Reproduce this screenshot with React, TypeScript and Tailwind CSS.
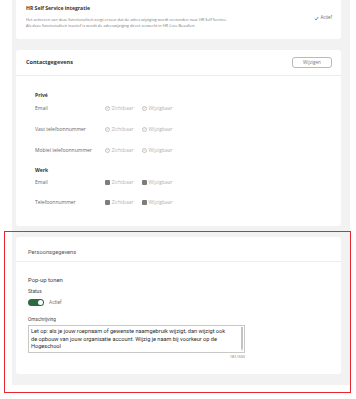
/**
 * Profiel instellingen — HR Self Service, contactgegevens en persoonsgegevens.
 */

const PRIVE_ROWS = ["Email", "Vast telefoonnummer", "Mobiel telefoonnummer"];
const WERK_ROWS = ["Email", "Telefoonnummer"];

export default function App() {
  return (
    <div className="relative w-[356px] h-[399px] bg-white overflow-hidden font-['Open_Sans',sans-serif]">
      <div className="ml-[12px] w-[338px] h-[385px] bg-[#f2f2f2] pl-[4px] pr-[9px] flex flex-col gap-[11px]">
        <HrCard />
        <ContactCard />
        <PersoonCard />
      </div>

      {/* Annotation frame */}
      <div className="absolute left-[4px] top-[231px] w-[347px] h-[162px] border-[1.5px] border-[#e8262c]" />
    </div>
  );
}

function HrCard() {
  return (
    <div className="h-[39px] bg-white rounded-b-[3px] pl-[10px] pr-[9px] pt-[5px] flex">
      <div className="flex-1">
        <div className="text-[5.1px] leading-[6px] font-bold text-[#333]">HR Self Service integratie</div>
        <div className="mt-[6px] text-[3.9px] leading-[6px] text-[#777] whitespace-nowrap">
          <div>Het activeren van deze functionaliteit zorgt ervoor dat de adres wijziging wordt verzonden naar HR Self Service.</div>
          <div>Als deze functionaliteit inactief is wordt de adreswijziging direct verwerkt in HR Core Beaufort.</div>
        </div>
      </div>
      <div className="pt-[10px] flex items-start gap-[2px] text-[4.4px] leading-[5px] text-[#666]">
        <svg width="5" height="5" viewBox="0 0 10 10" className="mt-[0.5px]">
          <path d="M1.5 5.5 L4 8 L8.5 2" fill="none" stroke="#3a8fd8" strokeWidth="1.8" />
        </svg>
        <span>Actief</span>
      </div>
    </div>
  );
}

function ContactCard() {
  return (
    <div className="h-[176px] bg-white rounded-[3px]">
      <div className="h-[26px] border-b border-[#ececec] pl-[10px] pr-[9px] flex items-center justify-between">
        <span className="text-[5.5px] font-bold text-[#333]">Contactgegevens</span>
        <button className="w-[40px] h-[11px] border border-[#b9b9b9] rounded-[3px] text-[4.6px] text-[#777] flex items-center justify-center">
          Wijzigen
        </button>
      </div>
      <div className="pl-[19px] pt-[16px]">
        <div className="text-[5px] leading-[6px] font-bold text-[#333]">Privé</div>
        <div className="mt-[7px] flex flex-col gap-[15px]">
          {PRIVE_ROWS.map((label) => (
            <PermRow key={label} label={label} checked />
          ))}
        </div>
        <div className="mt-[14px] text-[5px] leading-[6px] font-bold text-[#333]">Werk</div>
        <div className="mt-[6px] flex flex-col gap-[14px]">
          {WERK_ROWS.map((label) => (
            <PermRow key={label} label={label} checked={false} />
          ))}
        </div>
      </div>
    </div>
  );
}

function PermRow({ label, checked }: { label: string; checked: boolean }) {
  return (
    <div className="flex items-center h-[6px] text-[5px] leading-[6px]">
      <span className="w-[70px] shrink-0 text-[#666] whitespace-nowrap">{label}</span>
      <Perm label="Zichtbaar" checked={checked} />
      <span className="w-[11px] shrink-0" />
      <Perm label="Wijzigbaar" checked={checked} />
    </div>
  );
}

function Perm({ label, checked }: { label: string; checked: boolean }) {
  return (
    <span className="flex items-center gap-[1.5px] w-[26px] shrink-0 text-[#b3b3b3] whitespace-nowrap">
      {checked ? (
        <span className="w-[5px] h-[5px] shrink-0 rounded-full border-[0.6px] border-[#c4c4c4] flex items-center justify-center">
          <svg width="4" height="4" viewBox="0 0 10 10">
            <path d="M2 5.5 L4.2 7.5 L8 2.5" fill="none" stroke="#999" strokeWidth="1.4" />
          </svg>
        </span>
      ) : (
        <span className="w-[5px] h-[5px] shrink-0 rounded-[1px] bg-[#7d7d7d]" />
      )}
      <span>{label}</span>
    </span>
  );
}

function PersoonCard() {
  return (
    <div className="h-[137px] bg-white rounded-[3px] font-['Roboto',sans-serif]">
      <div className="h-[25px] border-b border-[#ececec] pl-[12px] pt-[11px]">
        <span className="text-[5.7px] leading-[8px] text-[#555] block">Persoonsgegevens</span>
      </div>
      <div className="pl-[12px] pt-[14px]">
        <div className="text-[5.9px] leading-[8px] text-[#444]">Pop-up tonen</div>
        <div className="mt-[5px] text-[4.8px] leading-[6px] text-[#444]">Status</div>
        <div className="mt-[4px] flex items-center gap-[5px]">
          <span className="w-[16px] h-[7px] rounded-full bg-[#2c6b3f] flex items-center justify-end pr-[1px]">
            <span className="w-[5px] h-[5px] rounded-full bg-white" />
          </span>
          <span className="text-[4.8px] text-[#777]">Actief</span>
        </div>
        <div className="mt-[11px] text-[4.8px] leading-[6px] text-[#444]">Omschrijving</div>
        <div className="mt-[2px] w-[217px] h-[28px] border border-[#c8c8c8] relative">
          <div className="pl-[2px] pt-[2px] text-[5.6px] leading-[7.6px] text-[#2b2b2b] whitespace-nowrap">
            Let op: als je jouw roepnaam of gewenste naamgebruik wijzigt, dan wijzigt ook
            <br />
            de opbouw van jouw organisatie account. Wijzig je naam bij voorkeur op de
            <br />
            Hogeschool
          </div>
          {/* scrollbar */}
          <div className="absolute right-[1px] top-[1px] bottom-[1px] w-[2px] bg-[#e4e4e4]">
            <div className="h-[22px] w-[2px] bg-[#c2c2c2]" />
          </div>
        </div>
        <div className="w-[217px] text-right text-[4px] leading-[6px] text-[#888] mt-[1px]">181/500</div>
      </div>
    </div>
  );
}
